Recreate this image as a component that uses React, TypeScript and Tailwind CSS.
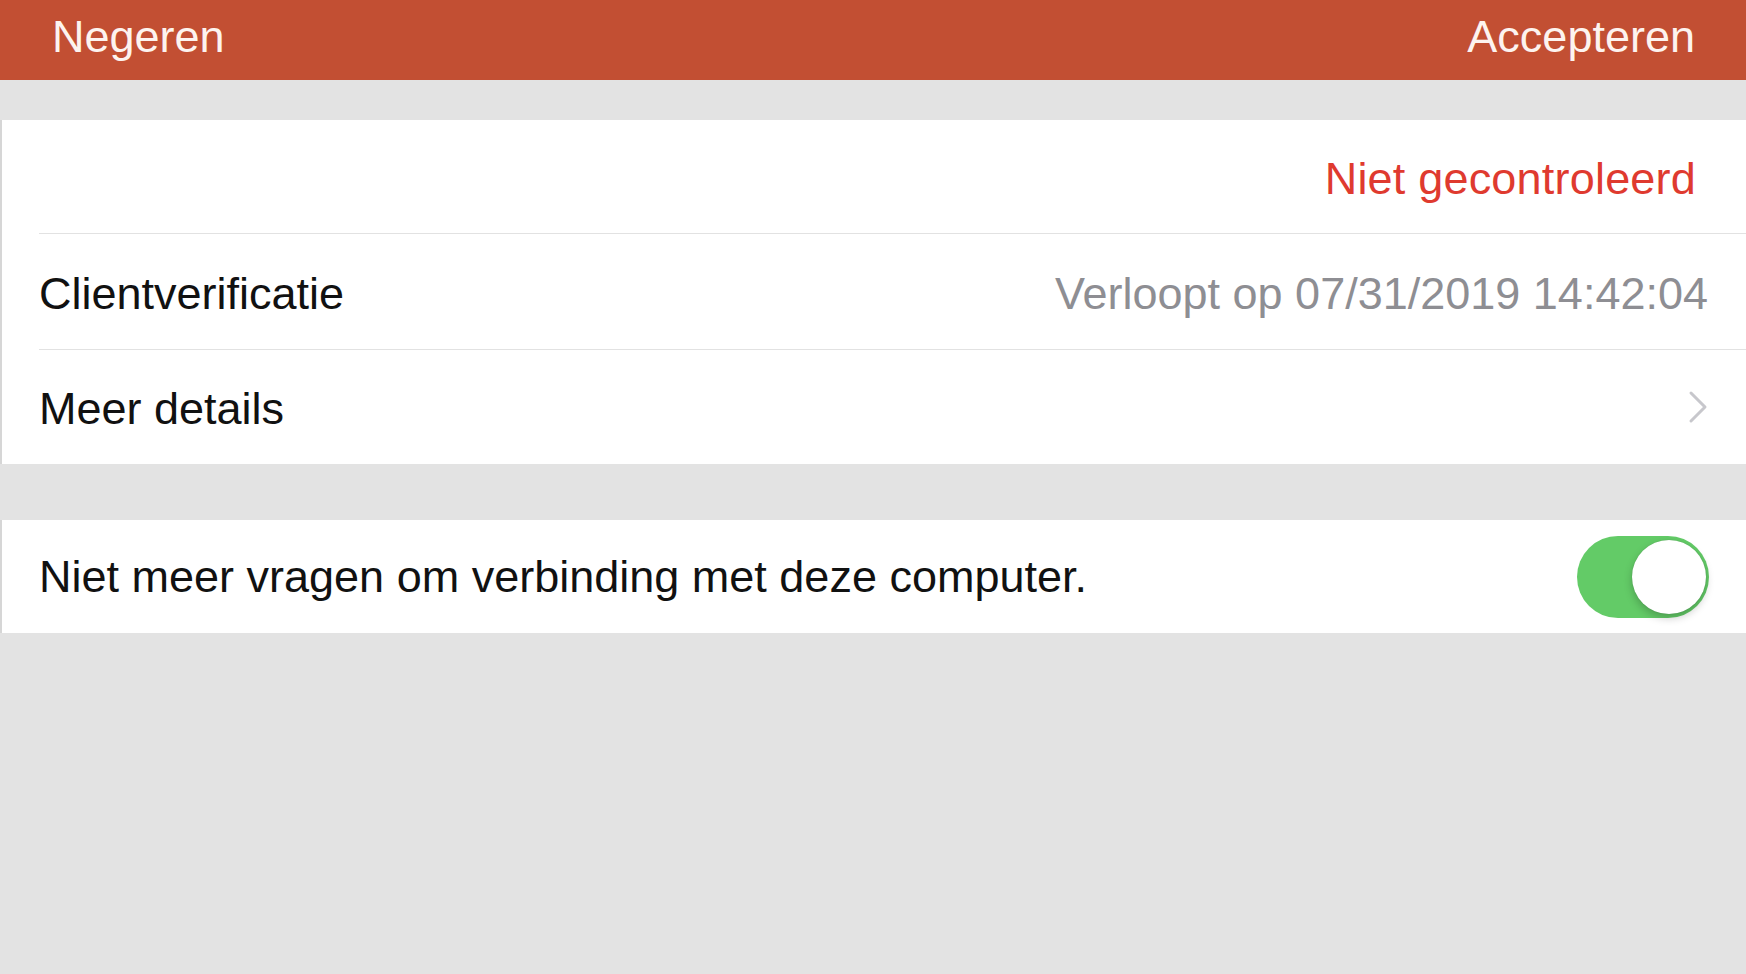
import React from "react";

export default function App() {
  const font = { fontFamily: '"Liberation Sans", Arial, sans-serif' };
  return (
    <div
      className="w-[1746px] h-[974px] bg-[#e3e3e3] overflow-hidden flex flex-col text-[45px] leading-none"
      style={font}
    >
      {/* Header */}
      <div className="h-[80px] bg-[#c24f33] flex items-center justify-between pl-[52px] pr-[51px] pb-[8px] text-[#fdf3ef]">
        <span>Negeren</span>
        <span>Accepteren</span>
      </div>

      {/* Gap */}
      <div className="h-[40px]" />

      {/* First group */}
      <div className="bg-white border-l-2 border-[#d6d6d6]">
        <div className="h-[113px] flex items-center justify-end pr-[50px] pt-[4px] text-[#df3a2f]">
          <span className="tracking-[0.2px]">Niet gecontroleerd</span>
        </div>
        <div className="ml-[37px] h-px bg-[#e2e2e2]" />
        <div className="h-[115px] flex items-center justify-between pl-[37px] pr-[38px] pt-[4px]">
          <span className="text-[#111111]">Clientverificatie</span>
          <span className="text-[#8e8e93]">Verloopt op 07/31/2019 14:42:04</span>
        </div>
        <div className="ml-[37px] h-px bg-[#e2e2e2]" />
        <div className="h-[114px] flex items-center justify-between pl-[37px] pr-[38px]">
          <span className="text-[#111111] pt-[2px]">Meer details</span>
          <svg width="20" height="34" viewBox="0 0 20 34" fill="none">
            <path
              d="M3 3 L17 17 L3 31"
              stroke="#c7c7cc"
              strokeWidth="3"
              strokeLinecap="round"
              strokeLinejoin="round"
            />
          </svg>
        </div>
      </div>

      {/* Gap */}
      <div className="h-[56px]" />

      {/* Second group */}
      <div className="bg-white border-l-2 border-[#d6d6d6] h-[113px] flex items-center justify-between pl-[37px] pr-[37px]">
        <span className="text-[#111111]">Niet meer vragen om verbinding met deze computer.</span>
        <div className="relative w-[132px] h-[82px] rounded-full bg-[#63cb67]">
          <div className="absolute right-[3px] top-[4px] w-[74px] h-[74px] rounded-full bg-white shadow-[0_4px_8px_rgba(0,0,0,0.22),0_0_1px_rgba(0,0,0,0.2)]" />
        </div>
      </div>
    </div>
  );
}
